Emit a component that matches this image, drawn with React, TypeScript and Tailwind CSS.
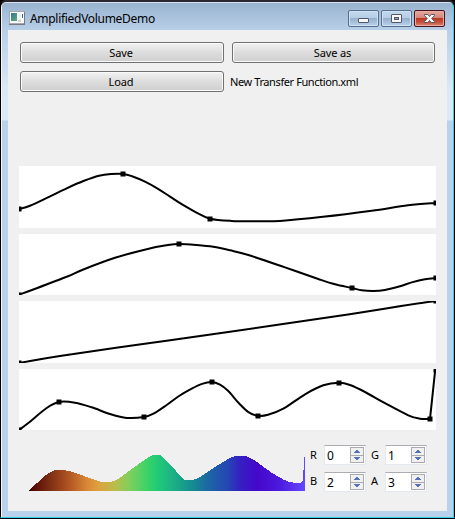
import React from "react";

type Pt = [number, number];

// Catmull-Rom interpolation through the samples, as cubic segments.
function smooth(pts: Pt[]): string {
  let d = `M${pts[0][0]} ${pts[0][1]}`;
  for (let i = 0; i < pts.length - 1; i++) {
    const a = pts[Math.max(0, i - 1)];
    const b = pts[i];
    const c = pts[i + 1];
    const e = pts[Math.min(pts.length - 1, i + 2)];
    d += `C${b[0] + (c[0] - a[0]) / 6} ${b[1] + (c[1] - a[1]) / 6} ${c[0] - (e[0] - b[0]) / 6} ${c[1] - (e[1] - b[1]) / 6} ${c[0]} ${c[1]}`;
  }
  return d;
}

interface Curve {
  top: number;
  height: number;
  samples: Pt[];
  handles: Pt[];
  tail?: Pt;
}

const curves: Curve[] = [
  {
    top: 166,
    height: 62,
    samples: [[19, 209], [30, 205.7], [48, 197.3], [66.7, 188.3], [84, 180.8], [99, 175.7], [111, 174], [123, 173.9], [132, 176.2], [145, 181.6], [158, 188.8], [170, 196.6], [181.7, 204.2], [196, 212.3], [210, 218.7], [231.7, 220.9], [256, 221.2], [280, 220.9], [323, 216.8], [371.7, 210.7], [408, 205.3], [436, 203]],
    handles: [[19, 209], [123, 174], [210, 219], [436, 203]],
  },
  {
    top: 234,
    height: 61,
    samples: [[19, 294.7], [33.3, 289.5], [66.7, 276.8], [83.3, 269.5], [115, 257.8], [146.7, 249.2], [166.7, 245.3], [179, 244], [196.7, 245], [213.3, 246.8], [230, 250.3], [248.3, 255], [285, 267.4], [318.3, 279], [335, 284.3], [352, 288], [361.7, 290.3], [373.3, 291.1], [385, 290], [400, 286.3], [411.7, 282.4], [425, 279.2], [436, 278]],
    handles: [[19, 295], [179, 244], [352, 288], [436, 278]],
  },
  {
    top: 301,
    height: 62,
    samples: [[19, 362.5], [23.3, 362.2], [60, 356], [143, 344], [230, 331.8], [348, 314.4], [395, 307], [430, 301.8], [436, 301.6]],
    handles: [[19, 363], [436, 301]],
  },
  {
    top: 369,
    height: 61,
    samples: [[19, 430], [28.3, 423], [46.7, 408], [59, 402], [75, 402.7], [91.7, 407.3], [110, 414], [126.7, 417.9], [144, 417], [154, 413.4], [166.7, 405], [178.3, 396.5], [191.7, 388.7], [202, 383.9], [211.7, 382], [220, 384.7], [228, 390.8], [239, 403.3], [248, 411.8], [257.7, 415.8], [268, 414.8], [283.3, 408.7], [305, 394.3], [323.3, 385.3], [339, 382.8], [350, 385], [365, 392], [385, 403.2], [408.3, 415.3], [420, 418.7], [430, 418.9]],
    handles: [[19, 430], [59, 402], [144, 417], [212, 382], [258, 416], [339, 383], [430, 419], [436, 370]],
    tail: [435.3, 369],
  },
];

function Plot({ curve }: { curve: Curve }) {
  return (
    <svg
      className="block w-full bg-white"
      height={curve.height}
      viewBox={`19 ${curve.top} 417 ${curve.height}`}
    >
      <path
        d={smooth(curve.samples) + (curve.tail ? `L${curve.tail[0]} ${curve.tail[1]}` : "")}
        fill="none"
        stroke="#000"
        strokeWidth="2"
      />
      {curve.handles.map(([x, y], i) => (
        <rect key={i} x={x - 2.5} y={y - 2.5} width="5" height="5" />
      ))}
    </svg>
  );
}

const spectrumTop: Pt[] = [[29, 490.5], [37, 483], [45, 475.7], [55, 470], [65, 470.3], [75, 472.7], [95, 480], [103, 482], [112, 481.5], [118, 479], [126.7, 472.7], [143.3, 460.7], [152, 455.5], [157, 454.6], [162, 456.3], [173.3, 468], [183, 478.7], [188, 480.2], [193, 479.8], [200, 477], [216.7, 466], [230, 458], [238, 456], [246, 456.3], [255, 460.7], [271.7, 472.7], [285, 480.3], [293, 482.5], [301, 483]];

const stops: [number, string][] = [
  [29, "#4a0000"], [48, "#7a2a12"], [70, "#b35723"], [87, "#d98736"], [98, "#dfa03e"],
  [115, "#b9bd4b"], [130, "#7dd05c"], [148, "#38d368"], [157, "#22ca76"], [168, "#1dba80"],
  [190, "#15918e"], [207, "#1b69a3"], [228, "#2545b5"], [240, "#3420c1"], [257, "#4508cb"],
  [278, "#4b18dc"], [305, "#6647ff"],
];

function Spectrum() {
  return (
    <svg className="block" width="277" height="40" viewBox="29 452 277 40" shapeRendering="crispEdges">
      <defs>
        <linearGradient id="spectrum" gradientUnits="userSpaceOnUse" x1="29" x2="305" y1="0" y2="0">
          {stops.map(([x, c]) => (
            <stop key={x} offset={(x - 29) / 276} stopColor={c} />
          ))}
        </linearGradient>
      </defs>
      <path d={smooth(spectrumTop) + "L303 480V470H304V457H305V491H29Z"} fill="url(#spectrum)" />
    </svg>
  );
}

function PushButton({ children }: { children: React.ReactNode }) {
  return (
    <button className="flex h-[21px] w-full items-center justify-center rounded-[3px] border border-[#707070] bg-linear-to-b from-[#f2f2f2] from-0% via-[#dddddd] via-50% to-[#cfcfcf] py-0 pr-[2px] pl-0 leading-[19px] tracking-[-0.1px] shadow-[inset_0_0_0_1px_#fafafa]">
      <span>{children}</span>
    </button>
  );
}

function Spinner({ label, value }: { label: string; value: number }) {
  return (
    <div className="flex h-5 items-center">
      <span className="w-[14px]">{label}</span>
      <div className="flex h-5 w-[42px] border border-[#e3e9ef] border-t-[#abadb3] bg-white">
        <span className="w-[25px] pt-px pl-[2px] text-[12px] leading-[18px]">{value}</span>
        <svg width="15" height="18" viewBox="0 0 15 18" shapeRendering="crispEdges">
          <path d="M.5 1.5h13v8H.5zM.5 9.5h13v7H.5z" fill="#f0f0f0" stroke="#a9abb0" />
          <path d="M6 4h2v1h1v1h1v1H4V6h1V5h1zM4 11h6v1H9v1H8v1H6v-1H5v-1H4z" fill="#5870b8" />
        </svg>
      </div>
    </div>
  );
}

function CaptionButton({ kind }: { kind: "minimize" | "maximize" | "close" }) {
  const close = kind === "close";
  return (
    <button
      aria-label={kind}
      className={
        "flex h-[17px] w-[31px] items-center justify-center rounded-[2px] border p-0 " +
        (close
          ? "border-[#47141f] bg-[linear-gradient(#e6a99f_0%,#d58478_47%,#b8381f_48%,#c75038_75%,#dc8b76_100%)] shadow-[inset_0_0_0_1px_#e9aaa0]"
          : "border-[#566d8b] bg-[linear-gradient(#c3d8ed_0%,#b5cde5_47%,#94afcd_48%,#a6c0dc_75%,#bdd5ed_100%)] shadow-[inset_0_0_0_1px_#d0e1f3]")
      }
    >
      <svg width="29" height="15" viewBox="0 0 29 15">
        {kind === "minimize" && <rect x="9.5" y="7.5" width="10" height="4" rx=".5" fill="#f7f7f7" stroke="#535666" />}
        {kind === "maximize" && (
          <>
            <rect x="9.5" y="3.5" width="10" height="8" rx=".5" fill="#f7f7f7" stroke="#535666" />
            <rect x="12.5" y="6.5" width="4" height="2" fill="#8ba6cb" stroke="#535666" />
          </>
        )}
        {close && (
          <path d="M9.5 3.5h3.3l1.7 2 1.7-2h3.3v1l-2.7 3 2.7 3v1h-3.3l-1.7-2-1.7 2H9.5v-1l2.7-3-2.7-3z" fill="#f7f7f7" stroke="#535666" />
        )}
      </svg>
    </button>
  );
}

export default function App() {
  return (
    <div className="h-[519px] w-[455px] bg-black font-['Noto_Sans','Open_Sans',sans-serif] text-[11px] text-black">
      <div className="flex h-[518px] flex-col rounded-t-[6px] border-t-2 border-r border-b border-l border-t-[#2b2730] border-r-transparent border-b-[#35cce5] border-l-black bg-black">
        <div className="flex grow flex-col rounded-t-[5px] border-t border-r border-l border-t-[#d5e3f1] border-r-[#35cce5] border-l-[#f4f8fc] bg-[linear-gradient(#99b3d0_0px,#b8cfe8_27px,#dce8f5_88px,#dce8f5_117px,#b9d1ea_118px)] pr-1.5 pb-1.5 pl-1.5">
          <header className="flex h-[27px] shrink-0 items-start">
            <svg className="mt-2 ml-[1px]" width="16" height="14" viewBox="0 0 16 14" shapeRendering="crispEdges">
              <defs>
                <linearGradient id="app-icon" x1="0" y1="0" x2="1" y2="1">
                  <stop stopColor="#397399" />
                  <stop offset="1" stopColor="#5cab78" />
                </linearGradient>
              </defs>
              <rect x=".5" y=".5" width="15" height="12" fill="#fafafa" stroke="#a5a9ad" />
              <path d="M0 13.5h16M15.5 1v12" stroke="#777b80" />
              <rect x="2" y="2" width="6" height="8" fill="url(#app-icon)" />
              <rect x="10" y="3" width="2" height="6" fill="#f1eeee" />
              <rect x="13" y="3" width="1" height="4" fill="#286b9c" />
              <rect x="9" y="9" width="3" height="2" fill="#d1d1d1" />
            </svg>
            <h1 className="mt-2 ml-[5px] text-[12px] leading-4 font-normal tracking-[-0.3px] whitespace-nowrap">AmplifiedVolumeDemo</h1>
            <div className="mt-[7px] mr-[2px] ml-auto flex gap-[2px]">
              <CaptionButton kind="minimize" />
              <CaptionButton kind="maximize" />
              <CaptionButton kind="close" />
            </div>
          </header>

          <main className="flex grow flex-col bg-[#f0f0f0] pr-[11px] pl-[11px]">
            <div className="mt-3 ml-px grid grid-cols-[204px_203px] gap-x-2 gap-y-2">
              <PushButton>Save</PushButton>
              <PushButton>Save as</PushButton>
              <PushButton>Load</PushButton>
              <span className="-ml-[2px] leading-[21px] tracking-[-0.4px] whitespace-nowrap">New Transfer Function.xml</span>
            </div>

            <section className="mt-[74px] flex w-[417px] flex-col gap-[6px]">
              {curves.map((curve) => (
                <Plot key={curve.top} curve={curve} />
              ))}
            </section>

            <footer className="flex pt-[15px] pl-[10px]">
              <div className="pt-[7px]">
                <Spectrum />
              </div>
              <div className="ml-[4px] grid grid-cols-[56px_56px] gap-x-[5px] gap-y-[6px]">
                <Spinner label="R" value={0} />
                <Spinner label="G" value={1} />
                <Spinner label="B" value={2} />
                <Spinner label="A" value={3} />
              </div>
            </footer>
          </main>
        </div>
      </div>
    </div>
  );
}
